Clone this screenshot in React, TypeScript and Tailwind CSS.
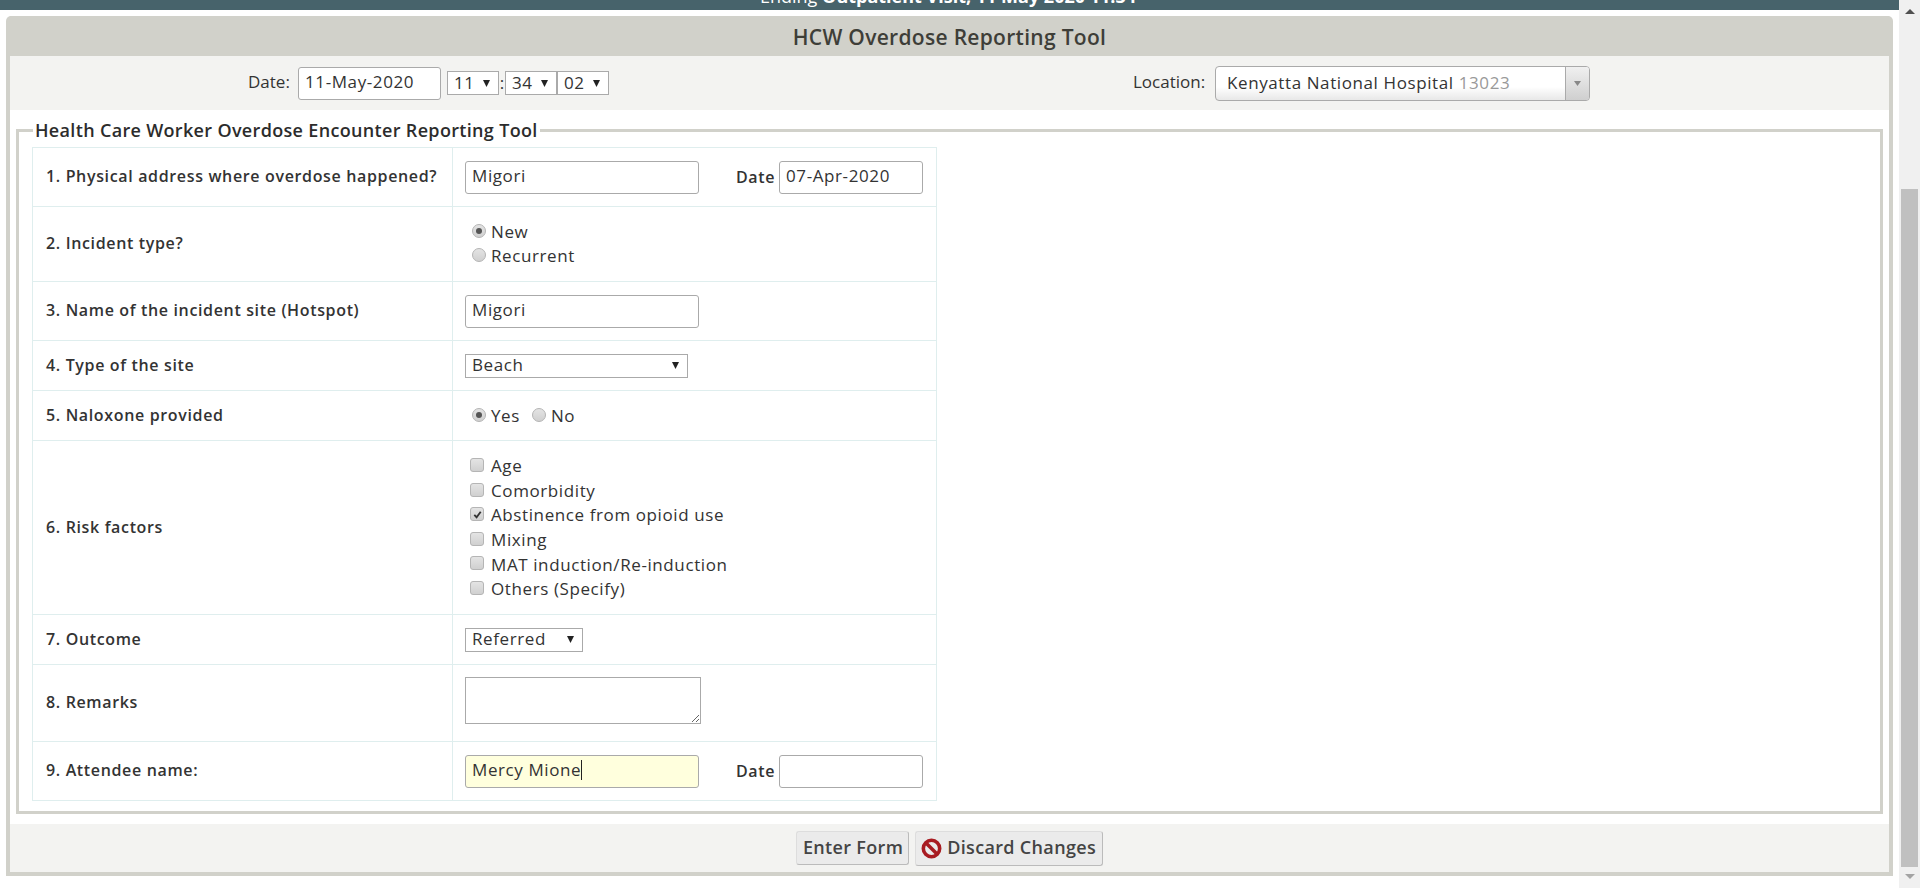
import { ReactNode } from 'react';

const rowCls = 'border border-[#dfeeee]';
const labelCls = 'w-[420px] whitespace-nowrap pb-[2px] pl-[13px] pr-2 text-[16px] font-semibold tracking-[0.65px] text-[#333333]';
const inputCls = 'h-[33px] rounded-[3px] border border-[#aaaaaa] px-[6px] pb-[3px] text-[17px] tracking-[0.6px] text-[#333333] outline-none';
const dateLabelCls = 'ml-[37px] w-[43px] whitespace-nowrap pb-[1px] text-[16px] font-semibold text-[#333333]';

const Row = ({ label, height, children }: { label: string; height: string; children: ReactNode }) => (
  <tr className={`${rowCls} ${height}`}>
    <td className={labelCls}>{label}</td>
    <td className="border-l border-[#dfeeee] pl-[12px] text-[17px] tracking-[0.6px] text-[#333333]">{children}</td>
  </tr>
);

const MiniSelect = ({ value, width }: { value: string; width: string }) => (
  <div className={`flex h-[24px] items-center justify-between border border-[#aaaaaa] bg-white pl-[6px] pr-[8px] text-[17px] leading-none tracking-[0.6px] text-[#333333] ${width}`}>
    <span className="mb-[2px]">{value}</span>
    <svg viewBox="0 0 7 7" className="h-[7px] w-[7px] fill-[#222222]"><path d="M0 0 L7 0 L3.5 7 Z" /></svg>
  </div>
);

const Radio = ({ checked }: { checked?: boolean }) => (
  <span className="mb-[3px] mr-[5px] inline-flex h-[14px] w-[14px] shrink-0 items-center justify-center rounded-full border border-[#b5b5b5] bg-gradient-to-b from-[#e4e4e4] to-[#d0d0d0]">
    {checked && <span className="h-[6px] w-[6px] rounded-full bg-[#555555]" />}
  </span>
);

const Checkbox = ({ checked }: { checked?: boolean }) => (
  <span className="mb-[3px] mr-[7px] inline-flex h-[14px] w-[14px] shrink-0 items-center justify-center rounded-[3px] border border-[#b5b5b5] bg-gradient-to-b from-[#e4e4e4] to-[#d0d0d0]">
    {checked && (
      <svg viewBox="0 0 12 12" className="h-[11px] w-[11px]">
        <path d="M2.5 6.5 L5 9 L9.5 3" fill="none" stroke="#333333" strokeWidth="2" />
      </svg>
    )}
  </span>
);

const risks = [
  { label: 'Age' },
  { label: 'Comorbidity' },
  { label: 'Abstinence from opioid use', checked: true },
  { label: 'Mixing' },
  { label: 'MAT induction/Re-induction' },
  { label: 'Others (Specify)' },
];

export default function App() {
  return (
    <div className="flex h-[888px] overflow-hidden bg-white font-['Open_Sans',sans-serif]">
      <div className="min-w-0 flex-1">
        {/* top banner, scrolled mostly out of view */}
        <div className="flex h-[10px] items-start justify-center overflow-hidden bg-[#47636b]">
          <div className="ml-[-3px] mt-[-16px] whitespace-nowrap text-[18px] leading-[24px] text-white">
            Ending <b>Outpatient Visit, 11 May 2020 11:34</b>
          </div>
        </div>

        <div className="mx-[6px] mt-[6px] rounded-t-[5px] border-x-[4px] border-b-[4px] border-[#d1d1ca]">
          <div className="flex h-[40px] items-center justify-center bg-[#d1d1ca] pt-[4px] text-[21px] font-semibold tracking-[0.3px] text-[#3e3e38]">
            HCW Overdose Reporting Tool
          </div>

          <div className="flex h-[54px] items-center bg-[#f3f3f1] text-[17px] text-[#333333]">
            <div className="ml-[238px] flex items-center">
              <span className="mt-[-3px] w-[50px]">Date:</span>
              <div className="flex h-[33px] w-[143px] items-center rounded-[3px] border border-[#aaaaaa] bg-white px-[6px] pb-[2px] tracking-[0.6px]">11-May-2020</div>
              <div className="ml-[6px] flex items-center">
                <MiniSelect value="11" width="w-[52px]" />
                <span className="w-[6px] text-center">:</span>
                <MiniSelect value="34" width="w-[52px]" />
                <MiniSelect value="02" width="w-[52px]" />
              </div>
            </div>
            <div className="ml-[524px] flex items-center">
              <span className="mt-[-3px] w-[82px] whitespace-nowrap">Location:</span>
              <div className="flex h-[35px] w-[375px] items-center justify-between rounded-[4px] border border-[#aaaaaa] bg-gradient-to-b from-white from-60% to-[#e8e8e8] pl-[11px] tracking-[0.6px]">
                <span>Kenyatta National Hospital <span className="text-[#999999]">13023</span></span>
                <span className="flex h-full w-[24px] items-center justify-center rounded-r-[3px] border-l border-[#aaaaaa] bg-gradient-to-b from-[#f0f0f0] to-[#cfcfcf]">
                  <svg viewBox="0 0 7 5" className="h-[5px] w-[7px] fill-[#888888]"><path d="M0 0 L7 0 L3.5 5 Z" /></svg>
                </span>
              </div>
            </div>
          </div>

          <div className="px-[6px] pb-[10px] pt-[9px]">
            <fieldset className="border-[3px] border-[#d1d1ca] pb-[10px] pl-[13px] pr-[10px]">
              <legend className="ml-[1px] px-[2px] text-[18px] font-semibold leading-[22px] tracking-[0.33px] text-[#2c2c2c]">
                Health Care Worker Overdose Encounter Reporting Tool
              </legend>
              <table className="mt-[6px] w-[905px] border-collapse border border-[#dfeeee]">
                <tbody>
                  <Row label="1. Physical address where overdose happened?" height="h-[59px]">
                    <div className="flex items-center">
                      <input readOnly value="Migori" className={`${inputCls} w-[234px] bg-white`} />
                      <span className={dateLabelCls}>Date</span>
                      <input readOnly value="07-Apr-2020" className={`${inputCls} w-[144px] bg-white`} />
                    </div>
                  </Row>
                  <Row label="2. Incident type?" height="h-[75px]">
                    <div className="pl-[7px] leading-[24px]">
                      <div className="flex items-center"><Radio checked />New</div>
                      <div className="flex items-center"><Radio />Recurrent</div>
                    </div>
                  </Row>
                  <Row label="3. Name of the incident site (Hotspot)" height="h-[59px]">
                    <input readOnly value="Migori" className={`${inputCls} w-[234px] bg-white`} />
                  </Row>
                  <Row label="4. Type of the site" height="h-[50px]">
                    <MiniSelect value="Beach" width="w-[223px]" />
                  </Row>
                  <Row label="5. Naloxone provided" height="h-[50px]">
                    <div className="flex items-center pl-[7px] pt-[1px]">
                      <Radio checked />Yes
                      <span className="ml-[12px] flex items-center"><Radio />No</span>
                    </div>
                  </Row>
                  <Row label="6. Risk factors" height="h-[174px]">
                    <div className="pl-[5px] pt-[1px] leading-[24.6px]">
                      {risks.map((risk) => (
                        <div key={risk.label} className="flex items-center">
                          <Checkbox checked={risk.checked} />
                          {risk.label}
                        </div>
                      ))}
                    </div>
                  </Row>
                  <Row label="7. Outcome" height="h-[50px]">
                    <MiniSelect value="Referred" width="w-[118px]" />
                  </Row>
                  <Row label="8. Remarks" height="h-[77px]">
                    <textarea readOnly className="mb-[5px] block h-[47px] w-[236px] border border-[#aaaaaa] bg-white outline-none" />
                  </Row>
                  <Row label="9. Attendee name:" height="h-[59px]">
                    <div className="flex items-center">
                      <div className={`${inputCls} flex w-[234px] items-center bg-[#ffffdd]`}>
                        Mercy Mione<span className="h-[20px] w-px bg-[#222222]" />
                      </div>
                      <span className={dateLabelCls}>Date</span>
                      <input readOnly value="" className={`${inputCls} w-[144px] bg-white`} />
                    </div>
                  </Row>
                </tbody>
              </table>
            </fieldset>
          </div>

          <div className="flex h-[48px] items-center justify-center gap-[6px] bg-[#f3f3f1]">
            <button className="flex h-[34px] items-center rounded-[3px] border border-[#dddddd] border-b-[#bbbbbb] border-r-[#bbbbbb] bg-[#ebebeb] pb-[2px] pl-[6px] pr-[5px] text-[18px] font-semibold tracking-[0.33px] text-[#444444]">
              Enter Form
            </button>
            <button className="flex h-[35px] items-center gap-[5px] rounded-[3px] border border-[#dddddd] border-b-[#bbbbbb] border-r-[#bbbbbb] bg-[#ebebeb] pb-[2px] pl-[5px] pr-[6px] text-[18px] font-semibold tracking-[0.33px] text-[#444444]">
              <svg viewBox="0 0 20 20" className="mt-[3px] h-[21px] w-[21px]">
                <circle cx="10" cy="10" r="7.8" fill="none" stroke="#a81c22" strokeWidth="3.4" />
                <path d="M4.5 4.5 L15.5 15.5" stroke="#a81c22" strokeWidth="3.4" />
              </svg>
              Discard Changes
            </button>
          </div>
        </div>
      </div>

      {/* page scrollbar */}
      <div className="flex w-[21px] shrink-0 flex-col items-center bg-[#f0f0f0]">
        <svg viewBox="0 0 10 5" className="mt-[9px] h-[5px] w-[10px] fill-[#505050]"><path d="M5 0 L10 5 L0 5 Z" /></svg>
        <div className="mt-[175px] h-[678px] w-[17px] bg-[#c0c0c0]" />
        <svg viewBox="0 0 10 5" className="mt-[7px] h-[5px] w-[10px] fill-[#a3a3a3]"><path d="M0 0 L10 0 L5 5 Z" /></svg>
      </div>
    </div>
  );
}
